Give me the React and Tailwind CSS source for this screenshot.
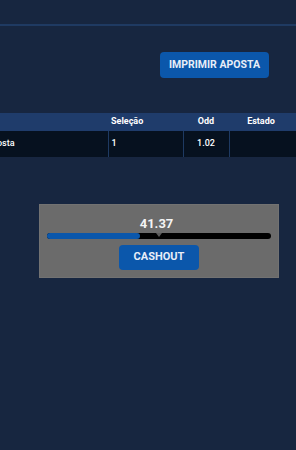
export default function App() {
  const font = { fontFamily: "Roboto, 'Liberation Sans', sans-serif" };
  return (
    <div className="w-[296px] h-[450px] overflow-hidden bg-[#172640] text-white" style={font}>
      <div className="h-[24px]" />
      <div className="h-[2px] bg-[#1f3a62]" />
      <div className="flex justify-end pr-[27px] pt-[26px]">
        <button className="h-[26px] w-[109px] rounded-[4px] bg-[#0b57ab] text-[10.5px] font-bold text-[#e8eef8] flex items-center justify-center">
          IMPRIMIR APOSTA
        </button>
      </div>
      <div className="mt-[35px] overflow-hidden">
        <table className="-ml-[40px] border-collapse text-[9px] table-fixed" style={{ width: 400 }}>
          <colgroup>
            <col style={{ width: 148 }} />
            <col style={{ width: 75 }} />
            <col style={{ width: 46 }} />
            <col style={{ width: 64 }} />
            <col style={{ width: 67 }} />
          </colgroup>
          <thead>
            <tr className="h-[18px] bg-[#1f3c6b] font-bold">
              <th className="text-left px-[3px]"></th>
              <th className="text-left px-[3px]">Seleção</th>
              <th className="text-center">Odd</th>
              <th className="text-center">Estado</th>
              <th></th>
            </tr>
          </thead>
          <tbody>
            <tr className="h-[26px] bg-[#06111f] font-medium">
              <td className="text-left pl-[26px] border-r border-[#1e3a62] whitespace-nowrap">Aposta</td>
              <td className="px-[3px] border-r border-[#1e3a62]">1</td>
              <td className="text-center border-r border-[#1e3a62]">1.02</td>
              <td></td>
              <td></td>
            </tr>
          </tbody>
        </table>
      </div>
      <div className="mt-[47px] ml-[39px] w-[240px] h-[74px] bg-[#6b6b6b] border border-[#727272] flex flex-col items-center pt-[11px]">
        <div className="text-[13px] font-bold leading-[15px] text-[#f4f4f4] mr-[5px]">41.37</div>
        <div className="relative mt-[2px] w-[224px] h-[6px] rounded-full bg-black">
          <div className="h-full rounded-full bg-[#0b57ab]" style={{ width: "41.5%" }} />
          <div className="absolute top-0 left-[109px] w-0 h-0 border-l-[3px] border-r-[3px] border-t-[4px] border-l-transparent border-r-transparent border-t-[#5a5a5a]" />
        </div>
        <button className="mt-[6px] h-[25px] w-[80px] rounded-[4px] bg-[#0b57ab] text-[11px] font-bold text-[#e8eef8] flex items-center justify-center">
          CASHOUT
        </button>
      </div>
    </div>
  );
}
